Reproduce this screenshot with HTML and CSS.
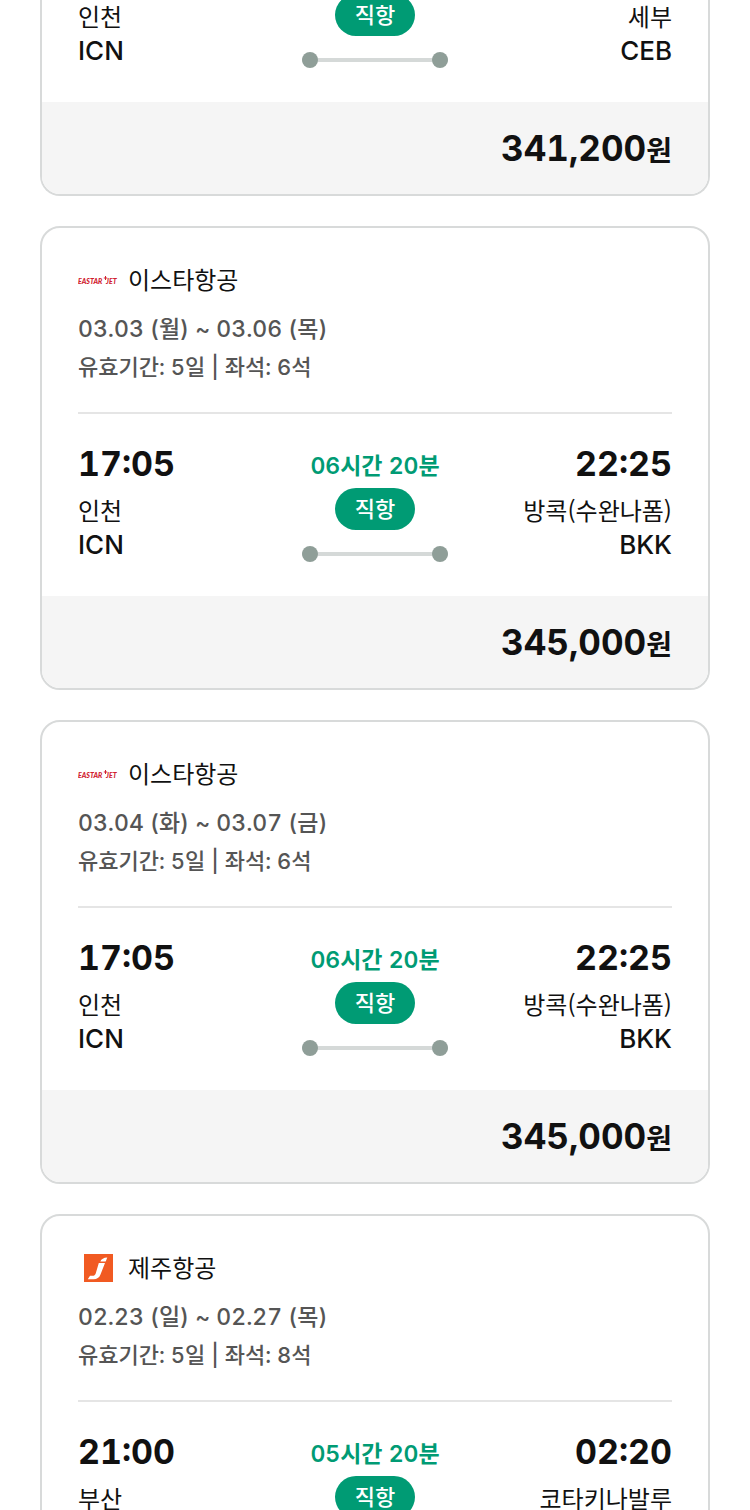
FILE: index.html
```html
<!DOCTYPE html>
<html lang="ko">
<head>
<meta charset="utf-8">
<meta name="viewport" content="width=device-width, initial-scale=1">
<title>항공권</title>
<link rel="stylesheet" href="styles.css">
</head>
<body>
<main class="list">
  <article class="card card-continued">
    <div class="card-body">
      <div class="route">
        <div class="place"><span class="city">인천</span><span class="code">ICN</span></div>
        <div class="leg"><span class="badge">직항</span><span class="track"></span></div>
        <div class="place place-end"><span class="city">세부</span><span class="code">CEB</span></div>
      </div>
    </div>
    <footer class="price">341,200<span class="won">원</span></footer>
  </article>

  <article class="card">
    <div class="card-body">
      <header class="summary">
        <h2 class="airline">
          <svg class="logo" viewBox="0 0 40 30" aria-hidden="true"><text class="eastar" x="0" y="18">EASTAR</text><text class="eastar" x="28" y="18">JET</text><path d="M27.500 10v4M25.800 12h3.400" stroke="#d0202e" stroke-width="1"/></svg>
          이스타항공
        </h2>
        <p class="info dates">03.03 (월) ~ 03.06 (목)</p>
        <p class="info">유효기간: 5일 | 좌석: 6석</p>
      </header>
      <div class="route">
        <div class="place"><time class="time">17:05</time><span class="city">인천</span><span class="code">ICN</span></div>
        <div class="leg"><span class="duration">06시간 20분</span><span class="badge">직항</span><span class="track"></span></div>
        <div class="place place-end"><time class="time">22:25</time><span class="city">방콕(수완나폼)</span><span class="code">BKK</span></div>
      </div>
    </div>
    <footer class="price">345,000<span class="won">원</span></footer>
  </article>

  <article class="card">
    <div class="card-body">
      <header class="summary">
        <h2 class="airline">
          <svg class="logo" viewBox="0 0 40 30" aria-hidden="true"><text class="eastar" x="0" y="18">EASTAR</text><text class="eastar" x="28" y="18">JET</text><path d="M27.500 10v4M25.800 12h3.400" stroke="#d0202e" stroke-width="1"/></svg>
          이스타항공
        </h2>
        <p class="info dates">03.04 (화) ~ 03.07 (금)</p>
        <p class="info">유효기간: 5일 | 좌석: 6석</p>
      </header>
      <div class="route">
        <div class="place"><time class="time">17:05</time><span class="city">인천</span><span class="code">ICN</span></div>
        <div class="leg"><span class="duration">06시간 20분</span><span class="badge">직항</span><span class="track"></span></div>
        <div class="place place-end"><time class="time">22:25</time><span class="city">방콕(수완나폼)</span><span class="code">BKK</span></div>
      </div>
    </div>
    <footer class="price">345,000<span class="won">원</span></footer>
  </article>

  <article class="card">
    <div class="card-body">
      <header class="summary">
        <h2 class="airline">
          <svg class="logo" viewBox="0 0 40 30" aria-hidden="true"><path d="M6 0h29v28H6z" fill="#f15a22"/><path d="M20.800 9h6.200L22.500 20.500c-1.300 3.400-3.500 4.700-7 4.700H9.800l2.200-3.400h2.600c1.600 0 2.500-.7 3.100-2.300zM22.300 7.400c1.200-2.200 3.200-3.600 7-3.800l-1.600 3.800z" fill="#fff"/></svg>
          제주항공
        </h2>
        <p class="info dates">02.23 (일) ~ 02.27 (목)</p>
        <p class="info">유효기간: 5일 | 좌석: 8석</p>
      </header>
      <div class="route">
        <div class="place"><time class="time">21:00</time><span class="city">부산</span></div>
        <div class="leg"><span class="duration">05시간 20분</span><span class="badge">직항</span></div>
        <div class="place place-end"><time class="time">02:20</time><span class="city">코타키나발루</span></div>
      </div>
    </div>
  </article>
</main>
</body>
</html>
```

FILE: styles.css
```css
* {
  box-sizing: border-box;
}

body {
  margin: 0;
  height: 100vh;
  overflow: hidden;
  background: #fff;
  color: #111;
  font-family: Inter, "Noto Sans CJK KR", sans-serif;
  font-size: 24px;
  font-variant-numeric: tabular-nums;
}

.list {
  display: flex;
  flex-direction: column;
  gap: 30px;
  padding: 0 40px;
}

.card {
  border: 2px solid #d8dada;
  border-radius: 20px;
  overflow: hidden;
}

.card-continued {
  margin-top: -6px;
  border-top: 0;
  border-top-left-radius: 0;
  border-top-right-radius: 0;
}

.card-body {
  padding: 36px 36px 34px;
}

.card-continued .card-body {
  padding-top: 0;
}

.summary {
  padding-bottom: 26px;
  border-bottom: 2px solid #e5e5e5;
  margin-bottom: 30px;
}

.airline {
  display: flex;
  align-items: center;
  gap: 10px;
  margin: 0 0 12px;
  font-size: 24px;
  font-weight: 400;
  line-height: 34px;
}

.logo {
  width: 40px;
  height: 30px;
}

.eastar {
  font: italic 900 7px Lato, sans-serif;
  fill: #d0202e;
}

.info {
  margin: 0;
  color: #555;
  font-size: 22px;
  font-weight: 500;
  line-height: 38px;
}

.dates {
  font-size: 23px;
}

.route {
  display: grid;
  grid-template-columns: 1fr 146px 1fr;
  align-items: end;
}

.card:last-child .route {
  align-items: start;
}

.place,
.leg {
  display: flex;
  flex-direction: column;
}

.place-end {
  text-align: right;
}

.time {
  margin-bottom: 9px;
  font-size: 34px;
  font-weight: 700;
  line-height: 40px;
}

.city {
  font-family: "Noto Sans CJK KR", sans-serif;
  line-height: 34px;
}

.code {
  font-size: 26px;
  font-weight: 500;
  line-height: 35px;
}

.leg {
  align-items: center;
}

.duration {
  margin-bottom: 8px;
  color: #009b74;
  font-size: 23px;
  font-weight: 600;
  line-height: 28px;
  white-space: nowrap;
}

.card:last-child .duration {
  margin-top: 8px;
}

.badge {
  padding: 0 20px;
  border-radius: 21px;
  background: #009b74;
  color: #fff;
  font-size: 22px;
  font-weight: 500;
  line-height: 42px;
}

.track {
  display: flex;
  align-items: center;
  justify-content: space-between;
  width: 100%;
  height: 16px;
  margin-top: 16px;
  background: linear-gradient(#d5d9d8, #d5d9d8) center / 100% 4px no-repeat;
}

.track::before,
.track::after {
  content: "";
  width: 16px;
  height: 16px;
  border-radius: 50%;
  background: #8f9e98;
}

.price {
  padding: 0 36px;
  background: #f5f5f5;
  font-size: 35px;
  font-weight: 700;
  line-height: 92px;
  text-align: right;
}

.won {
  font-size: 28px;
  line-height: 1;
}
```
